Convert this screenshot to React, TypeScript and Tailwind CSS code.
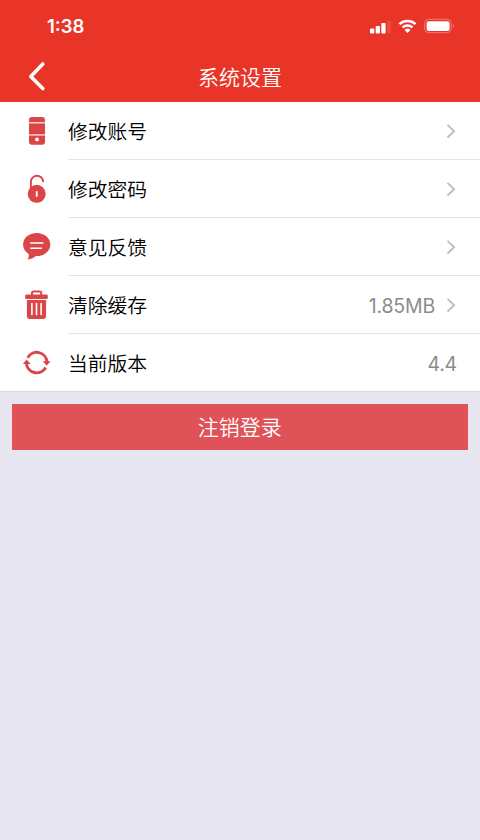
import type { ReactNode } from 'react';

const ICON_RED = '#db4547';

function PhoneIcon() {
  return (
    <svg width="36" height="36" viewBox="0 0 36 36" fill={ICON_RED}>
      <path d="M10 9.2V7a3 3 0 0 1 3-3h10a3 3 0 0 1 3 3v2.2z" />
      <rect x="10" y="10.4" width="16" height="11" />
      <path d="M10 22.6h16v6.2a3 3 0 0 1-3 3H13a3 3 0 0 1-3-3z" />
      <circle cx="18" cy="26.4" r="1.9" fill="#fff" />
    </svg>
  );
}

function LockIcon() {
  return (
    <svg width="36" height="36" viewBox="0 0 36 36" fill="none">
      <path d="M11.9 18v-6.800a6.100 6.100 0 0 1 12.200-.8v.6" stroke={ICON_RED} strokeWidth="1.9" />
      <circle cx="17.7" cy="22.800" r="9" fill={ICON_RED} />
      <rect x="16.800" y="20" width="1.900" height="6" rx="0.9" fill="#fff" />
    </svg>
  );
}

function FeedbackIcon() {
  return (
    <svg width="36" height="36" viewBox="0 0 36 36" fill={ICON_RED}>
      <path d="M17.7 4C10 4 4.1 9 4.1 15.600c0 4.200 2.100 7.300 5.500 9.300.5 1.700.1 3.700-.9 5.700 3.700-.4 6.300-1.800 8.200-3.500h.8c7.700 0 13.600-4.900 13.600-11.500S25.400 4 17.700 4z" />
      <path d="M11.800 14h12M11.800 19.200h10.500" stroke="#fff" strokeWidth="1.600" strokeLinecap="round" />
    </svg>
  );
}

function TrashIcon() {
  return (
    <svg width="36" height="36" viewBox="0 0 36 36" fill={ICON_RED}>
      <path d="M13 8.500V6.100A1.600 1.600 0 0 1 14.600 4.500h6A1.600 1.600 0 0 1 22.200 6.100V8.500" fill="none" stroke={ICON_RED} strokeWidth="2" />
      <rect x="6.200" y="7.600" width="22.600" height="4.400" rx="1.300" />
      <path d="M7.900 13.100h19.200v16a2.800 2.800 0 0 1-2.800 2.800H10.700a2.800 2.800 0 0 1-2.800-2.800z" />
      <path d="M12.900 16.600v11M17.500 16.600v11M22.100 16.600v11" stroke="#fff" strokeWidth="1.600" strokeLinecap="round" />
    </svg>
  );
}

function RefreshIcon() {
  return (
    <svg width="36" height="36" viewBox="0 0 36 36" fill="none">
      <path d="M8.700 12.700A10.300 10.300 0 0 1 28 17.200M26.700 22.500A10.300 10.300 0 0 1 7.400 18" stroke={ICON_RED} strokeWidth="3" />
      <path d="M23.600 16.300h8l-3.800 4.300z M3.800 18.900h8l-4.200-4.300z" fill={ICON_RED} />
    </svg>
  );
}

function Chevron() {
  return (
    <svg width="12" height="16" viewBox="0 0 12 16" fill="none" className="ml-[10px]">
      <path d="M2.500 1.900l6.600 6.300-6.600 6.300" stroke="#bebebe" strokeWidth="1.900" />
    </svg>
  );
}

function Row({ icon, label, value, arrow = true, last = false }: {
  icon: ReactNode;
  label: string;
  value?: string;
  arrow?: boolean;
  last?: boolean;
}) {
  return (
    <div className="flex h-[58px] items-center pl-[19px]">
      {icon}
      <div className={`ml-[13px] flex h-full flex-1 items-center border-b pr-[23px] ${last ? 'border-transparent' : 'border-[#e4e4e4]'}`}>
        <span className="flex-1 text-[19.8px] font-[350] text-black">{label}</span>
        {value && <span className="pt-[4px] font-['Inter','Liberation_Sans',sans-serif] text-[19.500px] tracking-[-0.2px] text-[#8c8c8e]">{value}</span>}
        {arrow && <Chevron />}
      </div>
    </div>
  );
}

function StatusBar() {
  return (
    <div className="flex h-[52px] items-center justify-between pl-[47px] pr-[27px]">
      <span className="pt-[2px] font-['Inter','Liberation_Sans',sans-serif] text-[18.500px] font-semibold">1:38</span>
      <div className="flex items-center">
        <svg width="22" height="16" viewBox="0 0 22 16" fill="#fff">
          <rect x="0" y="10.500" width="4.300" height="5" rx="1" />
          <rect x="5.700" y="8" width="4.300" height="7.500" rx="1" />
          <rect x="11.300" y="5" width="4.300" height="10.500" rx="1" />
          <rect x="17" y="2.500" width="4" height="13" rx="1" opacity="0.120" />
        </svg>
        <svg width="20" height="16" viewBox="0 0 20 16" fill="none" stroke="#fff" className="ml-[6px] mr-[1px]">
          <path d="M1.400 6.100a12 12 0 0 1 16.200 0" strokeWidth="2.500" />
          <path d="M4.500 9.400a7.500 7.500 0 0 1 10 0" strokeWidth="2.300" />
          <path d="M9.500 14.900l-2.900-2.900a4.200 4.200 0 0 1 5.800 0z" fill="#fff" stroke="none" />
        </svg>
        <svg width="32" height="16" viewBox="0 0 32 16" fill="none" className="ml-[5px] mr-[-3px]">
          <rect x="0.700" y="1.300" width="26.500" height="13.400" rx="4" stroke="#fff" strokeOpacity="0.350" />
          <rect x="2.600" y="3.200" width="23" height="9.700" rx="2.200" fill="#fff" />
          <path d="M28.800 5.800c1.500.8 1.500 3.700 0 4.500z" fill="#fff" fillOpacity="0.400" />
        </svg>
      </div>
    </div>
  );
}

export default function App() {
  return (
    <div className="flex h-[840px] w-[480px] flex-col overflow-hidden bg-[#e7e6f0] font-['Noto_Sans_CJK_SC',sans-serif]">
      <header className="h-[102px] bg-[#e93428] text-white">
        <StatusBar />
        <div className="flex h-[48px] items-center px-[26px]">
          <svg width="22" height="32" viewBox="0 0 22 32" fill="none">
            <path d="M16.800 4L4.800 16.500l12 12" stroke="#fff" strokeWidth="3.600" strokeLinecap="round" strokeLinejoin="round" />
          </svg>
          <h1 className="mr-[22px] flex-1 pt-[2px] text-center text-[21px] font-[350]">系统设置</h1>
        </div>
      </header>
      <main>
        <section className="border-b border-[#d9d9dc] bg-white">
          <Row icon={<PhoneIcon />} label="修改账号" />
          <Row icon={<LockIcon />} label="修改密码" />
          <Row icon={<FeedbackIcon />} label="意见反馈" />
          <Row icon={<TrashIcon />} label="清除缓存" value="1.85MB" />
          <div className="-mb-px">
            <Row icon={<RefreshIcon />} label="当前版本" value="4.4" arrow={false} last />
          </div>
        </section>
        <div className="pl-[11.500px] pr-[12px] pt-[11.500px]">
          <button className="flex h-[46px] w-full items-center justify-center bg-[#df5358] text-[21px] font-[350] text-white">
            注销登录
          </button>
        </div>
      </main>
    </div>
  );
}
